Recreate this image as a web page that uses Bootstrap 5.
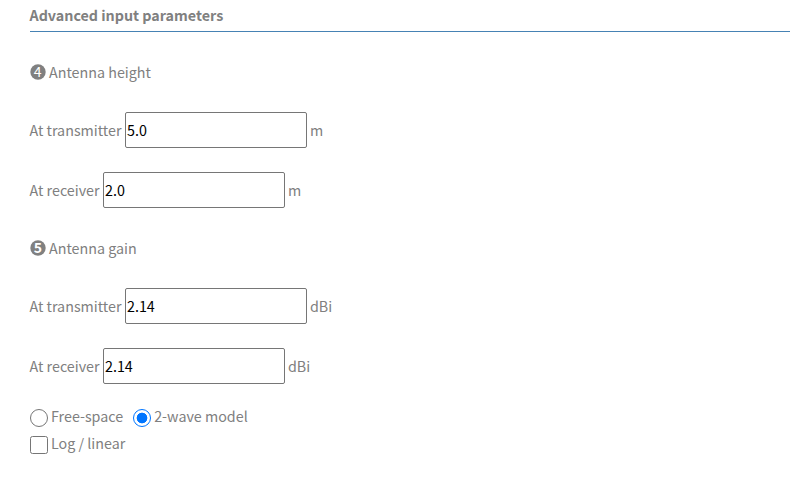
<!DOCTYPE html>
<html lang="en">
<head>
<meta charset="utf-8">
<title>Advanced input parameters</title>
<link href="https://cdn.jsdelivr.net/npm/bootstrap@5.3.0/dist/css/bootstrap.min.css" rel="stylesheet">
<style>
body{font-family:"Noto Sans CJK SC","Noto Sans",sans-serif;font-size:14.3px;line-height:24px;color:#808080;background:#fff;overflow:hidden}
.panel{padding:3px 9px 0 29.5px}
.heading{font-size:14.3px;line-height:24px;height:29px;border-bottom:1px solid #4682b4;margin-bottom:28px}
.section-title{height:24px;margin-bottom:28px}
.num{width:16px;height:16px;margin-right:3.5px;overflow:visible}
.num circle{fill:#808080}
.num text{fill:#fff;font-size:14px;text-anchor:middle}
.field{height:36px;margin-bottom:24px}
.field.last{margin-bottom:28px}
.field label,.field span{padding-bottom:1px}
.tx{width:95.5px}
.rx{width:73.5px}
.value{width:182px;height:36px;border:1px solid #767676;border-radius:2px;padding:1px 1px 3px;color:#000;font-size:14.3px;line-height:24px;margin-right:3px}
.option{height:27px}
.option label{margin-top:-4px}
.tick{appearance:none;width:18px;height:18px;border:1px solid #767676;border-radius:2.5px;margin:1px 3px 0 .5px;background:#fff}
.tick[type=radio]{border-radius:50%}
.tick[type=radio]:checked{border-color:#0075ff;background:radial-gradient(circle,#0075ff 5px,#fff 5.7px)}
.gap-after{margin-right:9.5px}
</style>
</head>
<body>
<main class="panel">
<h2 class="heading fw-bold">Advanced input parameters</h2>
<div class="section-title d-flex align-items-center"><svg class="num" viewBox="0 0 16 16"><circle cx="8" cy="8" r="7.7"/><text x="7.7" y="13">4</text></svg><span>Antenna height</span></div>
<div class="field d-flex align-items-center"><label class="tx text-nowrap" for="ht">At transmitter</label><input class="value" id="ht" value="5.0"><span>m</span></div>
<div class="field last d-flex align-items-center"><label class="rx text-nowrap" for="hr">At receiver</label><input class="value" id="hr" value="2.0"><span>m</span></div>
<div class="section-title d-flex align-items-center"><svg class="num" viewBox="0 0 16 16"><circle cx="8" cy="8" r="7.7"/><text x="8" y="13" font-weight="700">5</text></svg><span>Antenna gain</span></div>
<div class="field d-flex align-items-center"><label class="tx text-nowrap" for="gt">At transmitter</label><input class="value" id="gt" value="2.14"><span>dBi</span></div>
<div class="field d-flex align-items-center"><label class="rx text-nowrap" for="gr">At receiver</label><input class="value" id="gr" value="2.14"><span>dBi</span></div>
<div class="option d-flex"><input class="tick" type="radio" name="model" id="free"><label class="gap-after" for="free">Free-space</label><input class="tick" type="radio" name="model" id="wave" checked><label for="wave">2-wave model</label></div>
<div class="option d-flex"><input class="tick" type="checkbox" id="log"><label for="log">Log / linear</label></div>
</main>
<script src="https://cdn.jsdelivr.net/npm/bootstrap@5.3.0/dist/js/bootstrap.bundle.min.js"></script>
</body>
</html>
